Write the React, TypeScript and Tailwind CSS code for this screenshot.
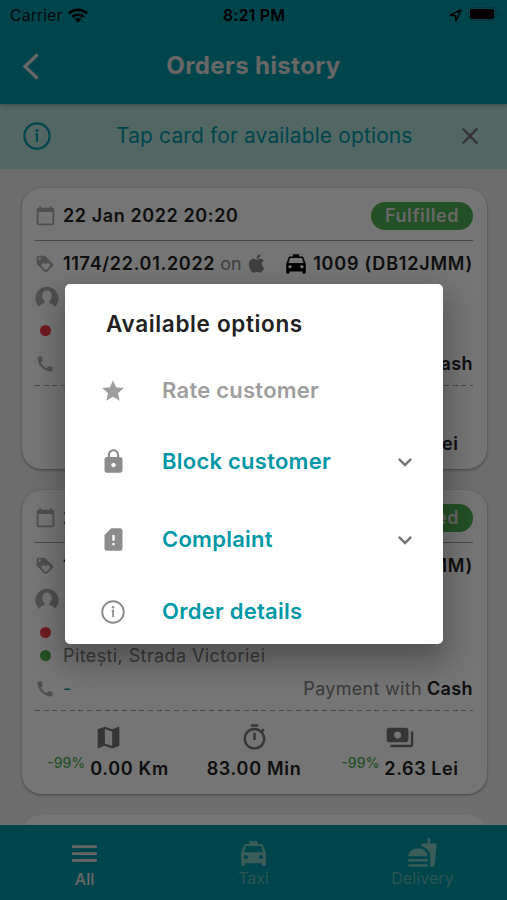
import React from 'react';
import { FaApple } from 'react-icons/fa';
import {
  MdCalendarToday,
  MdCall,
  MdClose,
  MdExpandMore,
  MdFastfood,
  MdLocalTaxi,
  MdLock,
  MdLoyalty,
  MdMap,
  MdMenu,
  MdOutlineTimer,
  MdPayments,
  MdSimCardAlert,
  MdStar,
} from 'react-icons/md';

interface Order {
  date: string;
  code: string;
  car: string;
  destination?: string;
  phone?: string;
  discount?: string;
  price: string;
}

const orders: Order[] = [
  { date: '22 Jan 2022 20:20', code: '1174/22.01.2022', car: '1009 (DB12JMM)', price: '2.63 Lei' },
  {
    date: '22 Jan 2022 20:18',
    code: '1173/22.01.2022',
    car: '1009 (DB12JMM)',
    destination: 'Pitești, Strada Victoriei',
    phone: '-',
    discount: '-99%',
    price: '2.63 Lei',
  },
];

const InfoIcon: React.FC<{ className?: string }> = ({ className }) => (
  <svg viewBox="0 0 28 28" className={className} fill="none" stroke="currentColor">
    <circle cx="14" cy="14" r="12.6" strokeWidth="2.2" />
    <path d="M12.400 12.300h1.700v7.800" strokeWidth="2" />
    <circle cx="14" cy="8.400" r="1.500" fill="currentColor" stroke="none" />
  </svg>
);

const AvatarIcon: React.FC = () => (
  <svg viewBox="0 0 24 24" className="h-6 w-6" fill="currentColor">
    <path d="M4.200 21A11.600 11.600 0 1 1 19.800 21C19.300 18.600 16.500 18 14.700 17.200c-.6-.4-.5-1.800-.1-2.300 1.400-1.400 2.100-3.200 2.100-5.300 0-3-1.800-5-4.700-5s-4.700 2-4.700 5c0 2.100.7 3.900 2.100 5.300.4.5.5 1.900-.1 2.300C7.500 18 4.700 18.600 4.200 21z" />
  </svg>
);

const StatusBar: React.FC = () => (
  <div className="grid h-[30px] grid-cols-3 items-center px-[10px] text-[16px] text-black">
    <div className="flex items-center gap-[6px]">
      <span className="text-black/85">Carrier</span>
      <svg viewBox="0 0 20 15" className="h-[15px] w-5" fill="none" stroke="currentColor" strokeWidth="2.7">
        <path d="M1 5.600a12.800 12.800 0 0 1 18 0M4.300 9a8.100 8.100 0 0 1 11.400 0" />
        <path d="M10 14.600L6.700 11.300a4.700 4.700 0 0 1 6.600 0z" fill="currentColor" stroke="none" />
      </svg>
    </div>
    <span className="pl-px text-center font-semibold tracking-[0.2px]">8:21 PM</span>
    <div className="flex items-center justify-end gap-[6px]">
      <svg viewBox="0 0 13 13" className="h-[13px] w-[13px]" fill="none" stroke="currentColor" strokeWidth="1.4">
        <path d="M1.200 6.200L12 1 7 12 6.500 6.700z" strokeLinejoin="round" />
      </svg>
      <div className="-mr-0.5 flex items-center pb-0.5">
        <div className="h-[14px] w-[28px] rounded-[4px] border border-black/20 p-px">
          <div className="h-full w-full rounded-[2px] bg-black" />
        </div>
        <div className="ml-px h-1 w-[2px] rounded-r bg-black/20" />
      </div>
    </div>
  </div>
);

const OrderCard: React.FC<{ order: Order }> = ({ order }) => (
  <div className="rounded-[20px] bg-white pl-[13px] pr-[14px] text-[18px] text-[#212121] shadow-[0_1px_3px_rgba(0,0,0,0.4)]">
    <div className="flex h-[53px] items-center border-b border-[#9e9e9e] pt-[3px]">
      <MdCalendarToday className="mr-[7px] h-[21px] w-[21px] text-[#adadad]" />
      <span className="font-semibold tracking-[0.6px]">{order.date}</span>
      <span className="ml-auto flex h-[28px] w-[102px] items-center justify-center rounded-full bg-[#4caf50] font-semibold tracking-[0.6px] text-[#e0e0e0]">
        Fulfilled
      </span>
    </div>
    <div className="flex h-[45px] items-center whitespace-nowrap">
      <MdLoyalty className="mr-2 h-5 w-5 text-[#adadad]" />
      <span className="font-semibold tracking-[0.7px]">{order.code}</span>
      <span className="ml-[5px] text-[#8a8a8a]">on</span>
      <FaApple className="ml-1 h-[21px] w-[21px] text-[#8a8a8a]" />
      <MdLocalTaxi className="ml-auto h-[26px] w-[26px] text-black" />
      <span className="ml-1 font-semibold tracking-[0.8px]">{order.car}</span>
    </div>
    <div className="flex h-6 items-center text-[#adadad]">
      <AvatarIcon />
    </div>
    <div className="mt-[9px] flex h-[23px] items-center">
      <span className="ml-[5px] h-[11px] w-[11px] rounded-full bg-[#ef3b45]" />
    </div>
    {order.destination && (
      <div className="flex h-[23px] items-center text-[#808080]">
        <span className="ml-[5px] mr-3 h-[11px] w-[11px] rounded-full bg-[#4caf50]" />
        <span className="tracking-[0.4px]">{order.destination}</span>
      </div>
    )}
    <div className="flex h-[43px] items-center">
      <MdCall className="mr-2 h-5 w-5 text-[#adadad]" />
      {order.phone && <span className="text-[#009688]">{order.phone}</span>}
      <span className="ml-auto tracking-[0.3px] text-[#808080]">Payment with</span>
      <span className="ml-[5px] font-semibold tracking-[0.4px]">Cash</span>
    </div>
    <div className="h-px bg-[repeating-linear-gradient(90deg,#a3a3a3_0_5px,transparent_5px_8.7px)]" />
    <div className="grid h-[83px] grid-cols-3 pt-3">
      <div className="flex flex-col items-center">
        <MdMap className="h-[29px] w-[29px] text-[#757575]" />
        <div className="flex whitespace-nowrap font-semibold leading-[33px]">
          {order.discount && (
            <span className="mr-[5px] text-[14px] font-medium leading-[22px] text-[#4caf50]">{order.discount}</span>
          )}
          <span className="tracking-[0.7px]">0.00 Km</span>
        </div>
      </div>
      <div className="flex flex-col items-center">
        <MdOutlineTimer className="h-[29px] w-[29px] text-[#757575]" />
        <span className="font-semibold leading-[33px] tracking-[0.7px]">83.00 Min</span>
      </div>
      <div className="flex flex-col items-center">
        <MdPayments className="h-[29px] w-[30px] text-[#757575]" />
        <div className="flex whitespace-nowrap font-semibold leading-[33px]">
          <span className="mr-[5px] text-[14px] font-medium leading-[22px] text-[#4caf50]">-99%</span>
          <span className="tracking-[0.6px]">{order.price}</span>
        </div>
      </div>
    </div>
  </div>
);

const BottomNav: React.FC = () => (
  <nav className="grid h-[75px] grid-cols-3 bg-[#0097a7] pt-3 text-[16px] text-[#80cbc4]">
    <div className="flex flex-col items-center text-[#e0e0e0]">
      <MdMenu className="h-[33px] w-[33px]" />
      <span className="font-medium leading-[18px]">All</span>
    </div>
    <div className="flex flex-col items-center">
      <MdLocalTaxi className="h-[33px] w-[33px]" />
      <span className="leading-[16px] text-[#5fb8b8]">Taxi</span>
    </div>
    <div className="flex flex-col items-center">
      <MdFastfood className="h-[31px] w-[31px]" />
      <span className="mt-0.5 leading-[16px] tracking-[0.1px] text-[#5fb8b8]">Delivery</span>
    </div>
  </nav>
);

const OptionsDialog: React.FC = () => (
  <div className="h-[360px] w-[378px] rounded-[5px] bg-white text-[22px] font-semibold tracking-[0.25px] text-[#0097a7] shadow-[0_14px_30px_4px_rgba(0,0,0,0.3)]">
    <h2 className="pb-[18px] pl-[41px] pt-6 text-[22.5px] leading-8 tracking-[0.65px] text-[#212121]">Available options</h2>
    <div className="flex h-[65px] items-center pl-[35px] pr-6 text-[#9e9e9e]">
      <MdStar className="mr-[36px] h-[26px] w-[26px]" />
      <span>Rate customer</span>
    </div>
    <div className="flex h-[77px] items-center pl-[35px] pr-6">
      <MdLock className="mr-[35px] h-[27px] w-[27px] text-[#8c8c8c]" />
      <span>Block customer</span>
      <MdExpandMore className="ml-auto h-7 w-7 text-[#757575]" />
    </div>
    <div className="flex h-[79px] items-center pl-[35px] pr-6">
      <MdSimCardAlert className="mr-[35px] h-[27px] w-[27px] text-[#8c8c8c]" />
      <span>Complaint</span>
      <MdExpandMore className="ml-auto h-7 w-7 text-[#757575]" />
    </div>
    <div className="flex h-[65px] items-center pl-[36px] pr-6">
      <InfoIcon className="mr-[37px] h-[24px] w-[24px] text-[#8c8c8c]" />
      <span>Order details</span>
    </div>
  </div>
);

const App: React.FC = () => {
  return (
    <div className="relative flex h-[900px] w-[507px] flex-col overflow-hidden bg-[#eeeeee] font-['Inter','Liberation_Sans',sans-serif]">
      <header className="z-0 h-[104px] shrink-0 bg-[#0097a7] shadow-[0_1px_4px_rgba(0,0,0,0.3)]">
        <StatusBar />
        <div className="grid h-[72px] grid-cols-[60px_1fr_60px] items-center text-[#e0e0e0]">
          <svg viewBox="0 0 17 27" className="ml-[22px] h-[27px] w-[17px]" fill="none" stroke="currentColor" strokeWidth="3.200">
            <path d="M15.500 1.500L3 13.500l12.500 12" />
          </svg>
          <h1 className="text-center text-[24px] font-bold tracking-[0.4px]">Orders history</h1>
        </div>
      </header>
      <div className="flex h-[65px] shrink-0 items-center bg-[#b2dfdb] px-[23px] pb-0.5 text-[21px] text-[#0097a7]">
        <InfoIcon className="h-7 w-7" />
        <span className="ml-[65px] whitespace-nowrap tracking-[0.12px]">Tap card for available options</span>
        <MdClose className="ml-auto h-7 w-7 text-[#757575]" />
      </div>
      <main className="flex min-h-0 flex-1 flex-col gap-[21px] overflow-hidden pl-[22px] pr-5 pt-[19px]">
        {orders.map((order) => (
          <OrderCard key={order.code} order={order} />
        ))}
        <div className="h-20 shrink-0 rounded-[20px] bg-white" />
      </main>
      <BottomNav />

      <div className="absolute inset-0 bg-black/54" />
      <div className="absolute left-[65px] top-[284px]">
        <OptionsDialog />
      </div>
    </div>
  );
};

export default App;
